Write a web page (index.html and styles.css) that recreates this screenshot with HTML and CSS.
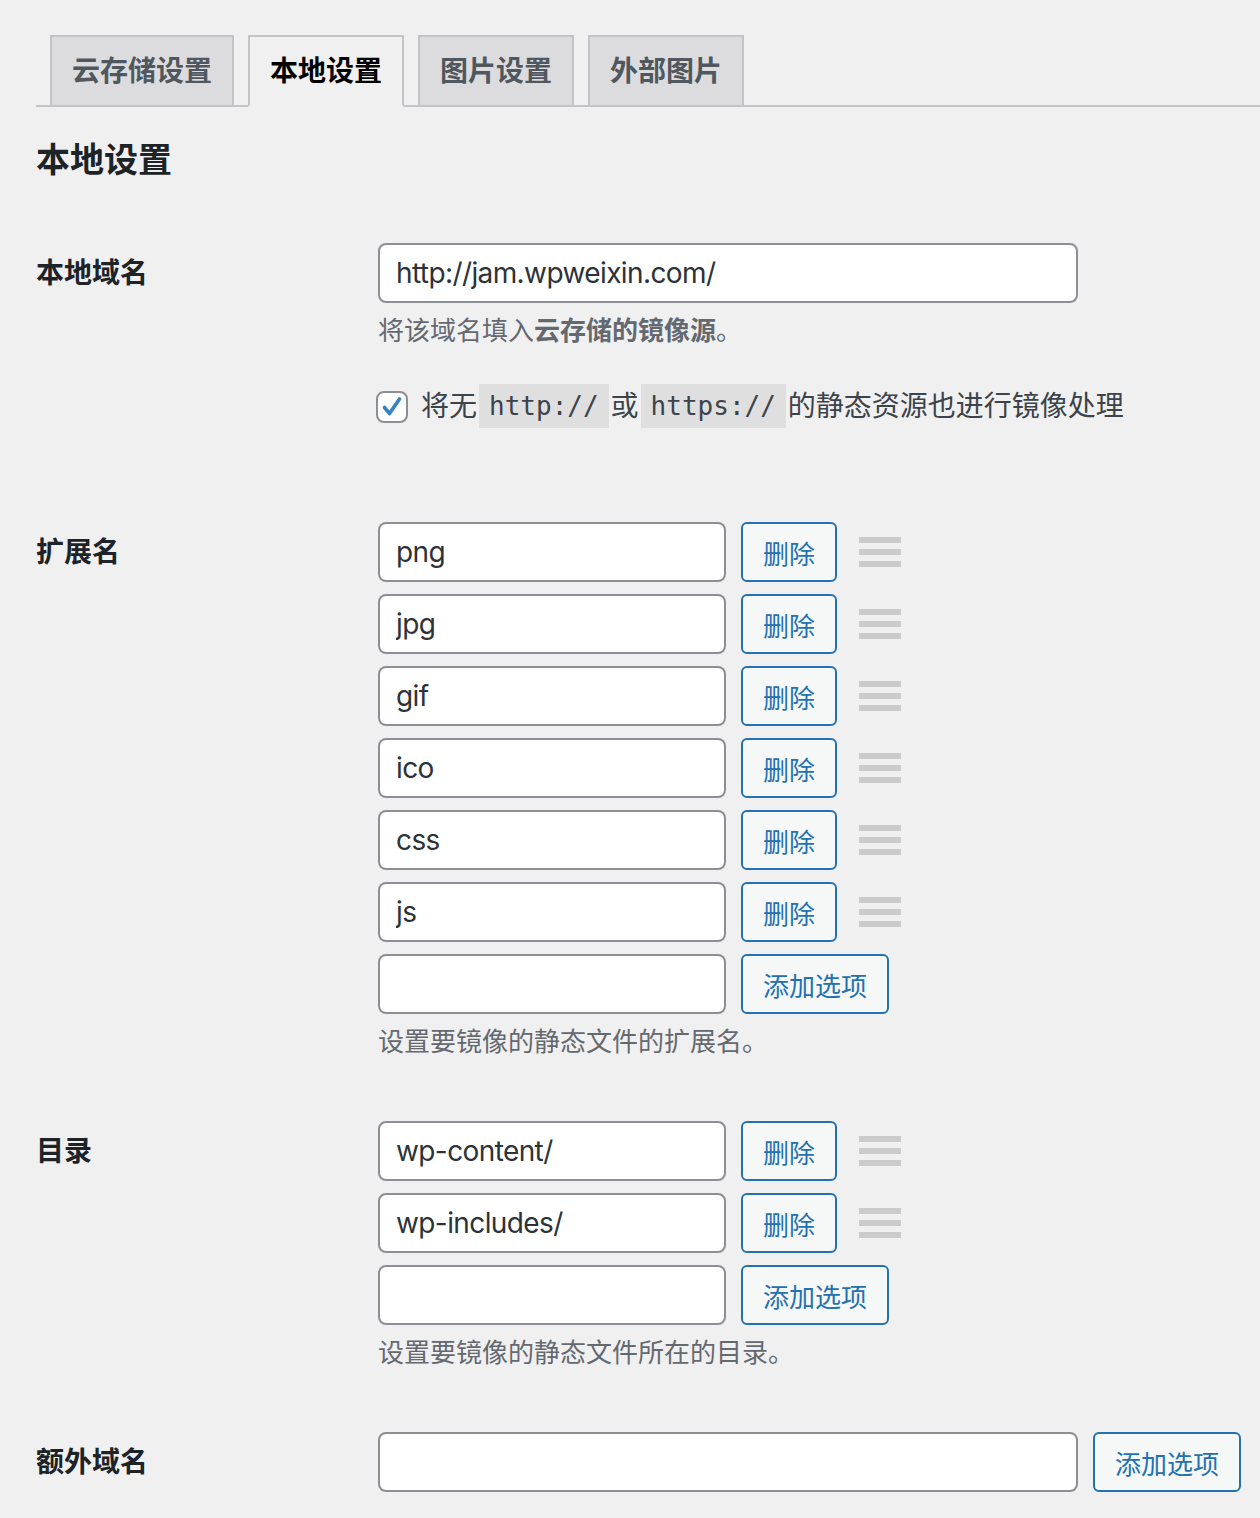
FILE: index.html
```html
<!DOCTYPE html>
<html lang="zh-CN">

<head>
  <meta charset="UTF-8">
  <meta name="viewport" content="width=device-width, initial-scale=1.0">
  <title>本地设置</title>

  <link rel="stylesheet" href="styles.css">
</head>

<body>
  <div class="wrap">
    <nav class="nav-tab-wrapper">
      <a class="nav-tab" href="#">云存储设置</a>
      <a class="nav-tab nav-tab-active" href="#">本地设置</a>
      <a class="nav-tab" href="#">图片设置</a>
      <a class="nav-tab" href="#">外部图片</a>
    </nav>

    <h2 class="section-title">本地设置</h2>

    <div class="form-table">
      <div class="form-row">
        <div class="row-label">本地域名</div>
        <div class="row-field">
          <input class="text-input wide" type="text" value="http://jam.wpweixin.com/">
          <p class="description">将该域名填入<strong>云存储的镜像源</strong>。</p>
          <p class="check-line">
            <span class="checkbox"><svg width="24" height="24" viewBox="0 0 24 24"><path d="M4.5 12.5 L9.5 18.5 L19.5 4" fill="none" stroke="#3582c4" stroke-width="3.6" stroke-linecap="round" stroke-linejoin="round"/></svg></span>将无<code>http://</code>或<code>https://</code>的静态资源也进行镜像处理
          </p>
        </div>
      </div>

      <div class="form-row">
        <div class="row-label">扩展名</div>
        <div class="row-field">
          <div class="option-list" id="extList"></div>
          <p class="description">设置要镜像的静态文件的扩展名。</p>
        </div>
      </div>

      <div class="form-row">
        <div class="row-label">目录</div>
        <div class="row-field">
          <div class="option-list" id="dirList"></div>
          <p class="description">设置要镜像的静态文件所在的目录。</p>
        </div>
      </div>

      <div class="form-row">
        <div class="row-label">额外域名</div>
        <div class="row-field">
          <div class="option-item">
            <input class="text-input wide" type="text" value="">
            <button class="button">添加选项</button>
          </div>
        </div>
      </div>
    </div>
  </div>

  <script>
    function renderOptions(listId, values) {
      const list = document.getElementById(listId);

      values.forEach(value => {
        const item = document.createElement('div');
        item.className = 'option-item';
        item.innerHTML =
          '<input class="text-input" type="text">' +
          '<button class="button">删除</button>' +
          '<span class="drag-handle"><i></i><i></i><i></i></span>';
        item.querySelector('input').value = value;
        list.appendChild(item);
      });

      // empty row for a new value
      const addItem = document.createElement('div');
      addItem.className = 'option-item';
      addItem.innerHTML = '<input class="text-input" type="text"><button class="button">添加选项</button>';
      list.appendChild(addItem);
    }

    renderOptions('extList', ['png', 'jpg', 'gif', 'ico', 'css', 'js']);
    renderOptions('dirList', ['wp-content/', 'wp-includes/']);
  </script>
</body>
</html>
```

FILE: styles.css
```css
body {
  background-color: #f0f0f1;
  color: #3c434a;
  font-family: Inter, "Noto Sans CJK SC", sans-serif;
  margin: 0;
}

.wrap {
  padding-left: 36px;
}

.nav-tab-wrapper {
  display: flex;
  padding-top: 35px;
  border-bottom: 2px solid #c3c4c7;
}

.nav-tab {
  display: block;
  margin-left: 14px;
  margin-bottom: -2px;
  padding: 10px 20px;
  font-size: 28px;
  line-height: 48px;
  font-weight: 600;
  color: #50575e;
  text-decoration: none;
  background-color: #dcdcde;
  border: 2px solid #c3c4c7;
}

.nav-tab-active {
  background-color: #f0f0f1;
  border-bottom-color: #f0f0f1;
  color: #000;
}

.section-title {
  margin: 31px 0;
  font-size: 34px;
  line-height: 44px;
  font-weight: 600;
  color: #1d2327;
}

.form-row {
  display: grid;
  grid-template-columns: 342px 1fr;
  padding: 30px 0;
}

.row-label {
  font-size: 28px;
  line-height: 60px;
  font-weight: 600;
  color: #1d2327;
}

.text-input {
  box-sizing: border-box;
  width: 348px;
  height: 60px;
  padding: 0 16px;
  font-family: inherit;
  font-size: 28px;
  letter-spacing: -0.6px;
  color: #2c3338;
  background-color: #fff;
  border: 2px solid #8c8f94;
  border-radius: 8px;
  outline: none;
}

.text-input.wide {
  width: 700px;
  display: block;
}

.description {
  margin: 8px 0 0;
  font-size: 26px;
  line-height: 39px;
  color: #646970;
}

.description strong {
  font-weight: 600;
}

.check-line {
  margin: 32px 0;
  font-size: 28px;
  line-height: 48px;
  color: #3c434a;
  white-space: nowrap;
}

.checkbox {
  box-sizing: border-box;
  width: 32px;
  height: 32px;
  margin-left: -2px;
  margin-right: 13px;
  display: inline-flex;
  align-items: center;
  justify-content: center;
  vertical-align: -3px;
  background-color: #fff;
  border: 2px solid #8c8f94;
  border-radius: 8px;
}

code {
  font-family: "DejaVu Sans Mono", monospace;
  font-size: 26px;
  line-height: 44px;
  margin: 2px 2px 0;
  padding: 0 10px;
  background-color: rgba(0, 0, 0, 0.07);
  display: inline-block;
  vertical-align: top;
}

.option-list {
  display: flex;
  flex-direction: column;
  gap: 12px;
}

.option-item {
  display: flex;
  align-items: center;
}

.button {
  box-sizing: border-box;
  height: 60px;
  margin-left: 15px;
  padding: 0 20px;
  font-family: inherit;
  font-size: 26px;
  color: #2271b1;
  background-color: #f6f7f7;
  border: 2px solid #2271b1;
  border-radius: 6px;
  cursor: pointer;
}

.drag-handle {
  margin-left: 22px;
  width: 42px;
  display: flex;
  flex-direction: column;
  gap: 6px;
}

.drag-handle i {
  display: block;
  height: 6px;
  background-color: #cbcbcb;
}
```
